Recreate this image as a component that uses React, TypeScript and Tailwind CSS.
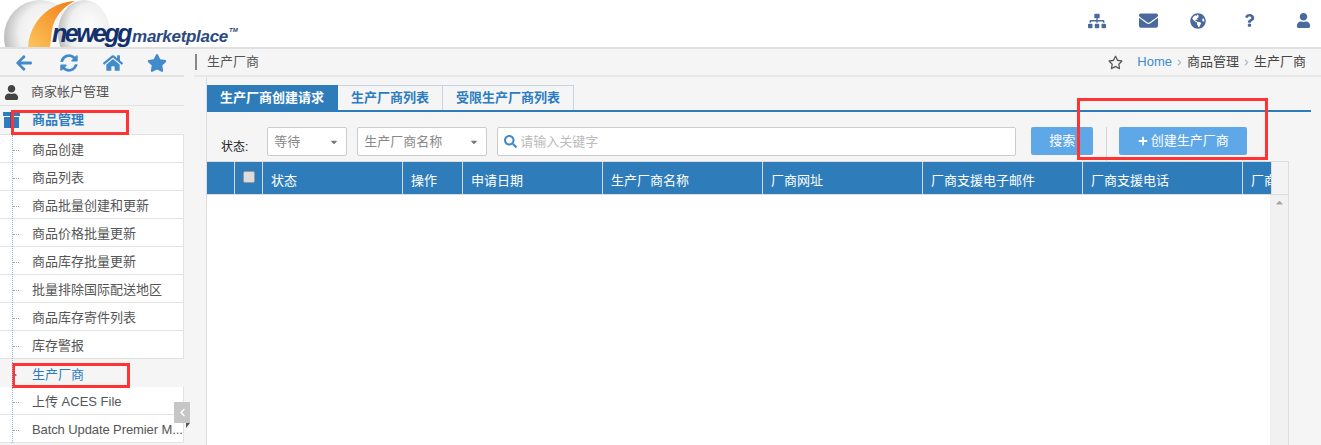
import {
  FaArrowLeft,
  FaSyncAlt,
  FaHome,
  FaStar,
  FaRegStar,
  FaUser,
  FaSitemap,
  FaEnvelope,
  FaGlobeAmericas,
  FaQuestion,
  FaSearch,
  FaPlus,
  FaChevronLeft,
  FaChevronRight,
  FaCaretDown,
  FaCaretUp,
} from "react-icons/fa";

const subItems = [
  "商品创建",
  "商品列表",
  "商品批量创建和更新",
  "商品价格批量更新",
  "商品库存批量更新",
  "批量排除国际配送地区",
  "商品库存寄件列表",
  "库存警报",
];

const columns = [
  { label: "", width: "w-[28px]" },
  { label: "", width: "w-[28px]", checkbox: true },
  { label: "状态", width: "w-[140px]" },
  { label: "操作", width: "w-[60px]" },
  { label: "申请日期", width: "w-[140px]" },
  { label: "生产厂商名称", width: "w-[160px]" },
  { label: "厂商网址", width: "w-[160px]" },
  { label: "厂商支援电子邮件", width: "w-[160px]" },
  { label: "厂商支援电话", width: "w-[160px]" },
  { label: "厂商", width: "w-[29px]" },
];

function Logo() {
  return (
    <div className="relative h-[47px] w-[260px] overflow-hidden">
      <svg className="absolute left-0 top-0" width="120" height="47" viewBox="0 0 120 47">
        <defs>
          <radialGradient id="egg" cx="0.6" cy="0.45" r="0.6">
            <stop offset="0" stopColor="#ffffff" />
            <stop offset="0.65" stopColor="#f0f0f0" />
            <stop offset="1" stopColor="#bdbdbd" />
          </radialGradient>
          <linearGradient id="orange" x1="1" y1="0" x2="0" y2="1">
            <stop offset="0" stopColor="#f07d14" />
            <stop offset="1" stopColor="#fcc45e" />
          </linearGradient>
        </defs>
        <ellipse cx="40" cy="37" rx="36" ry="37" fill="url(#egg)" />
        <ellipse cx="84" cy="33" rx="26" ry="33" fill="url(#egg)" />
        <path d="M28 47 C30 22 48 3 75 1 C62 7 54 18 52 30 L50 47 Z" fill="url(#orange)" />
      </svg>
      <div className="absolute left-[52px] top-[21px] flex items-baseline italic [font-family:'Liberation_Sans',sans-serif]">
        <span className="text-[25px] leading-none font-black tracking-[-2.5px] text-[#12306b]">newegg</span>
        <span className="ml-[2px] text-[17px] leading-none font-bold tracking-[-0.3px] text-[#2b4a80]">
          marketplace
        </span>
        <span className="ml-px self-start pt-[6px] text-[6px] leading-none font-bold text-[#2b4a80]">TM</span>
      </div>
    </div>
  );
}

function SelectBox({ label, className }: { label: string; className: string }) {
  return (
    <div
      className={`flex h-[29px] items-center justify-between rounded-[2px] border border-[#cccccc] bg-white pl-[6px] pr-[7px] text-[13px] text-[#888888] ${className}`}
    >
      <span>{label}</span>
      <FaCaretDown className="text-[10px] text-[#777777]" />
    </div>
  );
}

function TopIcon({ children }: { children: React.ReactNode }) {
  return <span className="flex w-[20px] justify-center">{children}</span>;
}

function Crumb() {
  return (
    <span className="flex w-[15px] justify-center">
      <FaChevronRight className="text-[7px] text-[#aab8c8]" />
    </span>
  );
}

export default function App() {
  return (
    <div className="relative h-[445px] w-[1321px] overflow-hidden bg-white text-[13px] text-[#555555] [font-family:'Liberation_Sans','Noto_Sans_CJK_SC',sans-serif]">
      <header className="flex h-[49px] items-start justify-between border-b-2 border-[#e0e0e0] bg-white">
        <Logo />
        <div className="flex items-center pr-[8px] pt-[11px] text-[#4a6a9e]">
          <TopIcon>
            <FaSitemap className="text-[18px]" />
          </TopIcon>
          <span className="ml-[31px]">
            <TopIcon>
              <FaEnvelope className="text-[19px]" />
            </TopIcon>
          </span>
          <span className="ml-[30px]">
            <TopIcon>
              <FaGlobeAmericas className="text-[16px]" />
            </TopIcon>
          </span>
          <span className="ml-[31px]">
            <TopIcon>
              <FaQuestion className="text-[13px]" />
            </TopIcon>
          </span>
          <span className="ml-[34px]">
            <TopIcon>
              <FaUser className="text-[15px]" />
            </TopIcon>
          </span>
        </div>
      </header>

      <div className="flex h-[396px]">
        <aside className="flex w-[184px] shrink-0 flex-col bg-[#f5f5f5]">
          <div className="flex h-[28px] items-center border-b-2 border-[#e4e4e4] pl-[15px] pt-[2px] text-[#428bca]">
            <FaArrowLeft className="text-[18px]" />
            <FaSyncAlt className="ml-[27px] text-[18px]" />
            <FaHome className="ml-[25px] text-[20px]" />
            <FaStar className="ml-[24px] text-[20px]" />
          </div>
          <div className="flex h-[29px] items-center gap-[12px] border-b border-[#e2e2e2] pl-[4px] pt-[2px] text-[#555555]">
            <FaUser className="w-[15px] text-[15px] text-[#444444]" />
            <span>商家帐户管理</span>
          </div>
          <div className="flex h-[29px] items-center gap-[12px] border-b border-[#e2e2e2] pl-[3px] font-bold text-[#2b7cc0]">
            <svg width="17" height="16" viewBox="0 0 17 16" className="shrink-0">
              <rect x="0" y="0" width="17" height="4" fill="#2b7cc0" />
              <rect x="1" y="5" width="15" height="11" fill="#2b7cc0" />
              <rect x="7" y="0" width="3" height="16" fill="#1f5f96" />
            </svg>
            <span>商品管理</span>
          </div>
          <ul className="relative flex flex-col">
            <span className="absolute bottom-0 left-[12px] top-0 z-10 border-l border-dotted border-[#8fb4d0]" />
            {subItems.map((item) => (
              <li
                key={item}
                className="flex h-[28px] items-center border-b border-r border-[#e2e2e2] bg-white pl-[13px] pt-[3px]"
              >
                <span className="mr-[13px] w-[6px] shrink-0 border-t border-dotted border-[#8fb4d0]" />
                <span>{item}</span>
              </li>
            ))}
            <li className="flex h-[28px] items-center bg-[#f5f5f5] pl-[13px] pt-[3px] text-[#2b7cc0]">
              <span className="mr-[13px] w-[6px] shrink-0 text-[8px] leading-none">▸</span>
              <span>生产厂商</span>
            </li>
            <li className="flex h-[28px] items-center border-b border-r border-[#e2e2e2] bg-white pl-[13px] pt-[3px]">
              <span className="mr-[13px] w-[6px] shrink-0 border-t border-dotted border-[#8fb4d0]" />
              <span>上传 ACES File</span>
            </li>
            <li className="flex h-[28px] items-center border-b border-r border-[#e2e2e2] bg-white pl-[13px] pt-[3px]">
              <span className="mr-[13px] w-[6px] shrink-0 border-t border-dotted border-[#8fb4d0]" />
              <span className="whitespace-nowrap tracking-[-0.1px]">Batch Update Premier M...</span>
            </li>
          </ul>
        </aside>

        <div className="relative flex w-[23px] shrink-0 flex-col bg-[#f5f5f5]">
          <div className="ml-[10px] flex h-[28px] items-center border-b-2 border-[#e8e8e8]">
            <span className="ml-px h-[16px] w-[2px] bg-[#888888]" />
          </div>
          <div className="flex-1 border-r border-[#dddddd]" />
          <div className="absolute left-[-10px] top-[353px] flex h-[21px] w-[16px] items-center justify-center bg-[#c6c6c6] text-white">
            <FaChevronLeft className="text-[9px]" />
          </div>
          <svg className="absolute left-[2px] top-[374px]" width="4" height="5" viewBox="0 0 4 5">
            <path d="M0 0 H4 L0 5 Z" fill="#555555" />
          </svg>
        </div>

        <main className="flex min-w-0 flex-1 flex-col bg-[#f5f5f5]">
          <div className="flex h-[28px] items-center justify-between border-b-2 border-[#e8e8e8] pr-[15px]">
            <span>生产厂商</span>
            <div className="flex items-center text-[#444444]">
              <FaRegStar className="mr-[7px] text-[15px] text-[#555555]" />
              <span className="ml-[7px] text-[#428bca]">Home</span>
              <Crumb />
              <span>商品管理</span>
              <Crumb />
              <span>生产厂商</span>
            </div>
          </div>

          <div className="pt-[8px]">
            <div className="-ml-px mr-[10px] flex h-[27px] items-stretch border-b-2 border-[#2e7dba] font-bold">
              <div className="flex w-[132px] items-center justify-center bg-[#2e7dba] text-white">生产厂商创建请求</div>
              <div className="flex w-[105px] items-center justify-center border-r border-t border-[#c5d4e6] text-[#2b7cc0]">
                生产厂商列表
              </div>
              <div className="flex w-[131px] items-center justify-center border-r border-t border-[#c5d4e6] text-[#2b7cc0]">
                受限生产厂商列表
              </div>
            </div>
          </div>

          <div className="flex h-[49px] items-start pl-[14px] pt-[15px]">
            <span className="mr-[19px] mt-[11px] text-[12px] text-[#222222]">状态:</span>
            <SelectBox label="等待" className="w-[80px]" />
            <SelectBox label="生产厂商名称" className="ml-[10px] w-[130px]" />
            <div className="ml-[10px] flex h-[29px] w-[519px] items-center gap-[3px] rounded-[2px] border border-[#cccccc] bg-white pl-[6px] text-[#bbbbbb]">
              <FaSearch className="text-[13px] text-[#428bca]" />
              <span>请输入关键字</span>
            </div>
            <div className="ml-[15px] flex h-[28px] w-[62px] items-center justify-center rounded-[2px] bg-[#5fa8e8] text-white">
              搜索
            </div>
            <span className="ml-[13px] h-[34px] w-px bg-[#d4d4d4]" />
            <div className="ml-[12px] flex h-[28px] w-[128px] items-center justify-center gap-[3px] rounded-[2px] bg-[#5fa8e8] text-white">
              <FaPlus className="text-[10px]" />
              <span>创建生产厂商</span>
            </div>
          </div>

          <div className="mr-[32px] flex flex-1 flex-col border-r border-t border-[#dddddd] bg-white">
            <div className="flex h-[33px] border-b border-[#dddddd]">
              <div className="flex w-[1064px] overflow-hidden bg-[#2e7dba] text-white">
                {columns.map((col, i) => (
                  <div
                    key={i}
                    className={`flex shrink-0 border-r border-[#d8d8d8] pl-[8px] pt-[9px] ${col.width}`}
                  >
                    {col.checkbox ? (
                      <span className="h-[12px] w-[12px] rounded-[2px] border border-[#999999] bg-[#dddddd]" />
                    ) : (
                      <span className="whitespace-nowrap">{col.label}</span>
                    )}
                  </div>
                ))}
              </div>
              <div className="flex-1 border-l border-[#dddddd] bg-[#f3f3f3]" />
            </div>
            <div className="flex flex-1">
              <div className="flex-1" />
              <div className="flex w-[18px] justify-center border-l border-[#eeeeee] bg-[#f1f1f1] pt-[2px] text-[#a8a8a8]">
                <FaCaretUp className="text-[11px]" />
              </div>
            </div>
          </div>
        </main>
      </div>

      {/* red annotation boxes drawn over the screenshot */}
      <div className="absolute left-[11px] top-[110px] h-[25px] w-[118px] border-[3px] border-[#ff3333]" />
      <div className="absolute left-[12px] top-[363px] h-[25px] w-[118px] border-[3px] border-[#ff3333]" />
      <div className="absolute left-[1077px] top-[98px] h-[62px] w-[191px] border-[3px] border-[#ff3333]" />
    </div>
  );
}
